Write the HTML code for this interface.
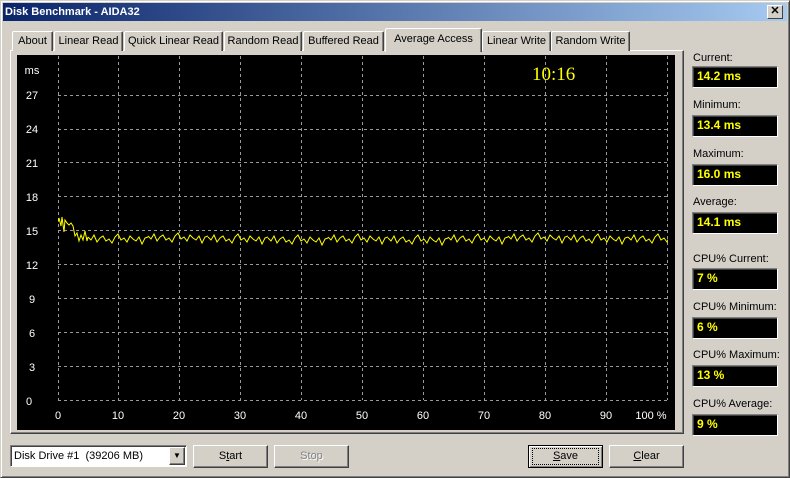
<!DOCTYPE html>
<html><head><style>
*{margin:0;padding:0;box-sizing:border-box}
body{width:790px;height:478px;background:#d4d0c8;font-family:"Liberation Sans",sans-serif;font-size:11px;color:#000;position:relative;overflow:hidden}
.abs{position:absolute}
#win{left:0;top:0;width:790px;height:478px;border:1px solid;border-color:#d4d0c8 #404040 #404040 #d4d0c8;box-shadow:inset 1px 1px 0 #fff,inset -1px -1px 0 #808080}
#title{left:3px;top:3px;width:784px;height:18px;background:linear-gradient(to right,#0a246a,#a6caf0);color:#fff;font-weight:bold;font-size:11px;line-height:18px;padding-left:2px}
#close{left:767px;top:5px;width:16px;height:14px;background:#d4d0c8;border:1px solid;border-color:#fff #404040 #404040 #fff;font-size:11px;font-weight:bold;line-height:11px;text-align:center;color:#000}
.tab{top:31px;height:20px;border:1px solid;border-color:#fff #404040 transparent #fff;border-bottom:none;line-height:18px;text-align:center;background:#d4d0c8;box-shadow:inset -1px 0 0 #808080;border-radius:2px 2px 0 0}
.tab.act{top:28px;height:24px;z-index:2;line-height:20px}
#panel{left:10px;top:50px;width:674px;height:384px;border:1px solid;border-color:#fff #404040 #404040 #fff;box-shadow:inset -1px -1px 0 #808080}
#chart{left:17px;top:55px;width:658px;height:375px;background:#000}
.lbl{color:#000}
.box{width:86px;height:22px;background:#000;border:1px solid;border-color:#808080 #fff #fff #808080;box-shadow:inset 1px 1px 0 #404040;color:#ff0;font-weight:bold;font-size:12px;line-height:19px;padding-left:4px;font-family:"Liberation Sans",sans-serif}
.btn{height:23px;border:1px solid;border-color:#fff #404040 #404040 #fff;box-shadow:inset -1px -1px 0 #808080;text-align:center;line-height:20px;background:#d4d0c8}
</style></head><body>
<div id="win" class="abs"></div>
<div id="title" class="abs">Disk Benchmark - AIDA32</div>
<div id="close" class="abs">✕</div>

<div id="panel" class="abs"></div>
<div class="abs tab" style="left:12px;width:41px">About</div>
<div class="abs tab" style="left:54px;width:69px">Linear Read</div>
<div class="abs tab" style="left:124px;width:99px">Quick Linear Read</div>
<div class="abs tab" style="left:224px;width:78px">Random Read</div>
<div class="abs tab" style="left:303px;width:81px">Buffered Read</div>
<div class="abs tab act" style="left:385px;width:97px;border-bottom:none;box-shadow:inset -1px 0 0 #808080, 0 2px 0 #d4d0c8">Average Access</div>
<div class="abs tab" style="left:482px;width:69px">Linear Write</div>
<div class="abs tab" style="left:551px;width:79px">Random Write</div>

<div id="chart" class="abs"></div>
<svg class="abs" style="left:0;top:0" width="790" height="478" font-family="Liberation Sans, sans-serif" font-size="11" fill="#fff">
<g stroke="#9a9a9a" stroke-width="1" stroke-dasharray="3,3" fill="none">
<path d="M58.5 56V400M118.5 56V400M179.5 56V400M240.5 56V400M301.5 56V400M362.5 56V400M423.5 56V400M484.5 56V400M545.5 56V400M606.5 56V400M667.5 56V400"/>
<path d="M58 400.5H668M58 366.5H668M58 332.5H668M58 298.5H668M58 264.5H668M58 230.5H668M58 196.5H668M58 162.5H668M58 129.5H668M58 95.5H668"/>
</g>
<g text-anchor="middle">
<text x="32" y="74">ms</text>
<text x="32" y="99">27</text><text x="32" y="133">24</text><text x="32" y="167">21</text><text x="32" y="201">18</text><text x="32" y="235">15</text><text x="32" y="269">12</text><text x="32" y="303">9</text><text x="32" y="337">6</text><text x="32" y="371">3</text><text x="29" y="405">0</text>
<text x="58" y="419">0</text><text x="118" y="419">10</text><text x="179" y="419">20</text><text x="240" y="419">30</text><text x="301" y="419">40</text><text x="362" y="419">50</text><text x="423" y="419">60</text><text x="484" y="419">70</text><text x="545" y="419">80</text><text x="606" y="419">90</text><text x="651" y="419">100 %</text>
</g>
<text x="532" y="80" fill="#ff0" font-family="Liberation Serif, serif" font-size="19">10:16</text>
<defs><clipPath id="cp"><rect x="58" y="56" width="610" height="344"/></clipPath>
<path id="seg" d="M0,237 L3,240 L6,235 L9,242 L12,238 L15,236 L18,241 L21,239 L24,243 L27,237 L30,234 L33,240 L36,238 L39,242 L42,236 L45,239 L48,241 L51,237 L54,244 L57,238 L60,237"/></defs>
<g clip-path="url(#cp)" stroke="#ff0" fill="none" stroke-width="1">
<polyline points="58,222 59,218 61,226 62,217 64,232 65,220 67,223 69,225 71,223 73,226 75,236 77,233 79,241 81,235 83,240 85,231 87,241 88,237"/>
<use href="#seg" transform="translate(88,0)"/>
<use href="#seg" transform="translate(148,-1)"/>
<use href="#seg" transform="translate(208,0)"/>
<use href="#seg" transform="translate(268,1)"/>
<use href="#seg" transform="translate(328,0)"/>
<use href="#seg" transform="translate(388,1)"/>
<use href="#seg" transform="translate(448,0)"/>
<use href="#seg" transform="translate(508,-1)"/>
<use href="#seg" transform="translate(568,0)"/>
<use href="#seg" transform="translate(628,0)"/>
</g>
</svg>

<div class="abs lbl" style="left:693px;top:52px">Current:</div>
<div class="abs box" style="left:692px;top:66px">14.2 ms</div>
<div class="abs lbl" style="left:693px;top:99px">Minimum:</div>
<div class="abs box" style="left:692px;top:115px">13.4 ms</div>
<div class="abs lbl" style="left:693px;top:148px">Maximum:</div>
<div class="abs box" style="left:692px;top:164px">16.0 ms</div>
<div class="abs lbl" style="left:693px;top:196px">Average:</div>
<div class="abs box" style="left:692px;top:212px">14.1 ms</div>
<div class="abs lbl" style="left:693px;top:253px">CPU% Current:</div>
<div class="abs box" style="left:692px;top:268px">7 %</div>
<div class="abs lbl" style="left:693px;top:301px">CPU% Minimum:</div>
<div class="abs box" style="left:692px;top:317px">6 %</div>
<div class="abs lbl" style="left:693px;top:349px">CPU% Maximum:</div>
<div class="abs box" style="left:692px;top:365px">13 %</div>
<div class="abs lbl" style="left:693px;top:398px">CPU% Average:</div>
<div class="abs box" style="left:692px;top:414px">9 %</div>

<div class="abs" style="left:10px;top:445px;width:177px;height:22px;background:#fff;border:1px solid;border-color:#808080 #fff #fff #808080;box-shadow:inset 1px 1px 0 #404040;line-height:20px;padding-left:3px">Disk Drive #1&nbsp; (39206 MB)</div>
<div class="abs btn" style="left:169px;top:447px;width:16px;height:18px;line-height:16px;font-size:8px">▼</div>
<div class="abs btn" style="left:193px;top:445px;width:75px">S<u>t</u>art</div>
<div class="abs btn" style="left:274px;top:445px;width:75px;color:#808080;text-shadow:1px 1px 0 #fff">Stop</div>
<div class="abs btn" style="left:528px;top:445px;width:75px;border:1px solid #000;box-shadow:inset 1px 1px 0 #fff,inset -1px -1px 0 #808080"><span style="outline:1px dotted #000;outline-offset:0;display:inline-block;width:65px;line-height:15px;margin-top:2px"><u>S</u>ave</span></div>
<div class="abs btn" style="left:609px;top:445px;width:75px"><u>C</u>lear</div>
</body></html>
